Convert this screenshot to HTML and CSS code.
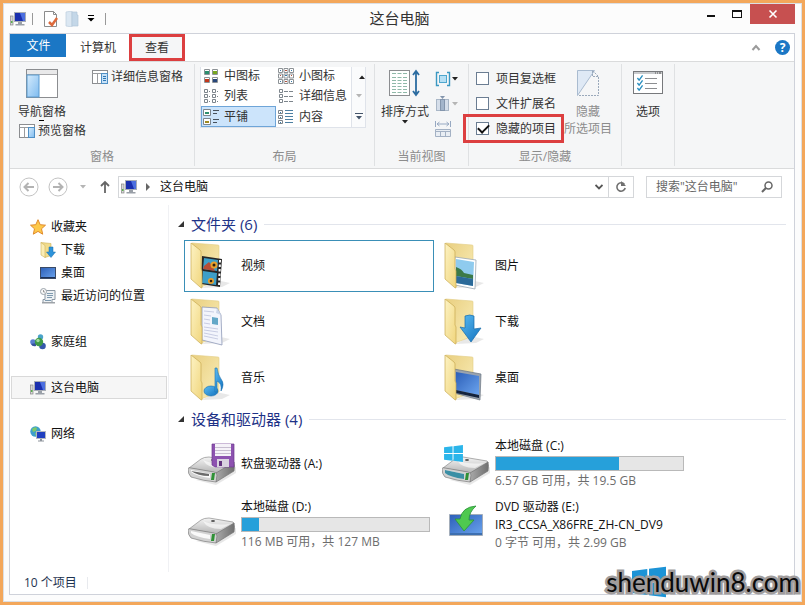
FILE: index.html
```html
<!DOCTYPE html>
<html lang="zh-CN">
<head>
    <meta charset="UTF-8">
    <meta name="viewport" content="width=device-width, initial-scale=1.0">
    <title>这台电脑</title>
    <link rel="stylesheet" href="styles.css">
</head>
<body>
    <!-- shared icon shapes -->
    <svg class="defs" width="0" height="0">
        <defs>
            <linearGradient id="gFlap" x1="0" y1="0" x2="1" y2="1">
                <stop offset="0" stop-color="#fdf3c4"/>
                <stop offset="1" stop-color="#f0d57c"/>
            </linearGradient>
            <linearGradient id="gBack" x1="0" y1="0" x2="1" y2="1">
                <stop offset="0" stop-color="#e9cf80"/>
                <stop offset="1" stop-color="#faeeba"/>
            </linearGradient>
            <linearGradient id="gBlue" x1="0" y1="0" x2="1" y2="1">
                <stop offset="0" stop-color="#5cbcf2"/>
                <stop offset="1" stop-color="#1272bf"/>
            </linearGradient>
            <linearGradient id="gScreen" x1="0" y1="0" x2="1" y2="1">
                <stop offset="0" stop-color="#2c5fb8"/>
                <stop offset="1" stop-color="#6ba4ee"/>
            </linearGradient>
            <linearGradient id="gPane" x1="0" y1="0" x2="1" y2="1">
                <stop offset="0" stop-color="#d5ebfc"/>
                <stop offset="1" stop-color="#7fbcf0"/>
            </linearGradient>
            <linearGradient id="gMetal" x1="0" y1="0" x2="0" y2="1">
                <stop offset="0" stop-color="#f4f4f4"/>
                <stop offset="1" stop-color="#b4b4b4"/>
            </linearGradient>
            <linearGradient id="gSide" x1="0" y1="0" x2="1" y2="0">
                <stop offset="0" stop-color="#a9a9a9"/>
                <stop offset="1" stop-color="#6f6f6f"/>
            </linearGradient>
        </defs>
        <symbol id="pc" viewBox="0 0 16 16">
            <rect x="0.5" y="5" width="2.5" height="9" fill="#d8d8d8" stroke="#888" stroke-width="0.7"/>
            <rect x="1" y="10" width="1.5" height="2" fill="#58b04c"/>
            <rect x="4.5" y="1.5" width="11" height="9" fill="#1a2fae" stroke="#a8adb6"/>
            <path d="M10 2h5v8h-2z" fill="#4c6fe0"/>
            <path d="M8 11h4v2H8zM5.500 13h9v1.500h-9z" fill="#9aa0a8"/>
        </symbol>
        <symbol id="folder" viewBox="0 0 48 48">
            <path d="M14 46l20-1 8-4-14-3z" fill="#d9d9d9" opacity="0.6"/>
            <path d="M4 1l26 2q1 0 1 1v34l-18 7z" fill="url(#gBack)" stroke="#e2cd85" stroke-width="0.6"/>
        </symbol>
        <symbol id="flap" viewBox="0 0 48 48">
            <path d="M3 1l9 7q1 1 1 2v17l1 2v17q-1 0-2-1L3 37z" fill="url(#gFlap)" stroke="#c9ab52" stroke-width="0.7"/>
        </symbol>
        <symbol id="disk" viewBox="0 0 48 48">
            <path d="M8 40l20 5 20-12v-6z" fill="#cfcfcf" opacity="0.5"/>
            <path d="M1 28l12-9q3-2 8-2l24 4q2 1 0 3L29 33z" fill="url(#gMetal)" stroke="#8d8d8d" stroke-width="0.7"/>
            <path d="M46 22L28 33v9l18-11q1-5 0-9z" fill="url(#gSide)" stroke="#777" stroke-width="0.7"/>
            <path d="M0 29q0-2 3-1l23 4q3 1 3 3l-1 7q-12-1-25-5-3-3-3-8z" fill="#d2d2d2" stroke="#7c7c7c" stroke-width="0.7"/>
            <path d="M3 30l19 4v4Q8 36 3 32z" fill="#fafafa"/>
            <path d="M24 33h3l-1 7h-3z" fill="#2f9136"/>
            <path d="M15 20q10 5 27 3l-9 5q-14 0-18-8z" fill="#fff" opacity="0.6"/>
            <ellipse cx="25" cy="20" rx="2" ry="1" fill="#555"/>
        </symbol>
        <symbol id="caret" viewBox="0 0 6 4">
            <path d="M0 0h6L3 3.500z"/>
        </symbol>
        <symbol id="winlogo" viewBox="0 0 20 18">
            <path d="M0 2.500l9-1.200v7.200H0zM10 1.200L20 0v8.500H10zM0 9.500h9v7.200l-9-1.200zM10 9.500h10V18l-10-1.200z"/>
        </symbol>
        <symbol id="tick" viewBox="0 0 8 7">
            <path d="M1 3.500L3 6l4-5.500" fill="none" stroke="#2a8fc0" stroke-width="1.600"/>
        </symbol>
    </svg>

    <div class="window">
        <header class="title-bar">
            <div class="quick-access">
                <svg class="icon16"><use href="#pc"/></svg>
                <span class="bar"></span>
                <svg class="icon16 page" viewBox="0 0 16 16">
                    <path d="M1.500 0.500h9l3 3v12h-12z" fill="#fff" stroke="#8b8b8b"/>
                    <path d="M10.500 0.500v3h3" fill="none" stroke="#8b8b8b"/>
                    <path d="M6 11l3 3 5-7" fill="none" stroke="#dd6a3c" stroke-width="2.500"/>
                </svg>
                <svg class="icon16" viewBox="0 0 16 16">
                    <path d="M1 1l6-1v16l-6-1z" fill="#dbe7f2" stroke="#bccddd" stroke-width="0.700"/>
                    <path d="M7 1h5v3h1v11H7z" fill="#c4d7e8" stroke="#b3c6d8" stroke-width="0.700"/>
                </svg>
                <svg class="quick-more" viewBox="0 0 8 7"><path d="M1 0h6v1H1zM0.500 3h7L4 6.500z"/></svg>
                <span class="bar"></span>
            </div>
            <h1>这台电脑</h1>
            <div class="window-controls">
                <button type="button" aria-label="最小化">
                    <svg width="10" height="10" viewBox="0 0 10 10"><path d="M1 6h8v2H1z" fill="#111"/></svg>
                </button>
                <button type="button" aria-label="最大化">
                    <svg width="10" height="10" viewBox="0 0 10 10"><path d="M0 1h10v8H0zM1 3v5h8V3z" fill="#111" fill-rule="evenodd"/></svg>
                </button>
                <button type="button" class="close" aria-label="关闭">
                    <svg width="10" height="10" viewBox="0 0 10 10"><path d="M1.500 1.500l7 7M8.500 1.500l-7 7" stroke="#fff" stroke-width="1.600"/></svg>
                </button>
            </div>
        </header>

        <div class="frame">
            <div class="tabs">
                <button type="button" class="tab file">文件</button>
                <button type="button" class="tab">计算机</button>
                <button type="button" class="tab active marked">查看</button>
                <div class="tab-tools">
                    <svg width="10" height="7" viewBox="0 0 10 7"><path d="M1.500 6L5 2l3.500 4" fill="none" stroke="#9b9b9b" stroke-width="2"/></svg>
                    <button type="button" class="help" aria-label="帮助">?</button>
                </div>
            </div>

            <div class="ribbon">
                <section class="group panes">
                    <div class="group-body">
                        <div class="pane-column">
                            <button type="button" class="big">
                                <svg width="32" height="30" viewBox="0 0 32 30">
                                    <rect x="0.500" y="0.500" width="31" height="28" fill="#fff" stroke="#8b8d90"/>
                                    <path d="M1 1h30v4H1z" fill="#e9e9ea"/>
                                    <path d="M1 5.500h30" stroke="#a8a8aa"/>
                                    <rect x="1" y="6" width="12" height="22" fill="url(#gPane)" stroke="#5b9bd0"/>
                                </svg>
                                <span>导航窗格</span>
                                <svg class="dash" width="6" height="2"><path d="M0 0h5v1H0z"/></svg>
                            </button>
                            <button type="button" class="small">
                                <svg class="icon16" viewBox="0 0 16 16">
                                    <rect x="0.500" y="1.500" width="15" height="13" fill="#fff" stroke="#8b8d90"/>
                                    <path d="M0.500 4.500h15M5.500 4.500v10" stroke="#9a9c9f"/>
                                    <rect x="9.500" y="4.500" width="6" height="10" fill="url(#gPane)" stroke="#4f8fc4"/>
                                </svg>
                                预览窗格
                            </button>
                        </div>
                        <button type="button" class="small">
                            <svg class="icon16" viewBox="0 0 16 16">
                                <rect x="0.500" y="1.500" width="15" height="13" fill="#fff" stroke="#8b8d90"/>
                                <path d="M0.500 4.500h15M5.500 4.500v10" stroke="#9a9c9f"/>
                                <rect x="9.500" y="4.500" width="6" height="10" fill="#c8e2f8" stroke="#4f8fc4"/>
                                <path d="M11 7.500h3M11 9.500h3M11 11.500h3" stroke="#2e78b5"/>
                            </svg>
                            详细信息窗格
                        </button>
                    </div>
                    <h2>窗格</h2>
                </section>

                <section class="group layout">
                    <div class="group-body">
                        <div class="gallery">
                            <button type="button">
                                <svg class="icon16" viewBox="0 0 16 16">
                                    <path d="M1.500 1.500h5v5h-5zM9.500 1.500h5v5h-5zM1.500 9.500h5v5h-5zM9.500 9.500h5v5h-5z" fill="#fff" stroke="#8d9296"/>
                                    <path d="M2 3h4v3H2z" fill="#2d8f6f"/><path d="M10 3h4v3h-4z" fill="#78a820"/>
                                    <path d="M2 11h4v3H2z" fill="#c3381c"/><path d="M10 11h4v3h-4z" fill="#27467a"/>
                                </svg>
                                中图标
                            </button>
                            <button type="button">
                                <svg class="icon16" viewBox="0 0 16 16">
                                    <path d="M0.500 0.500h4v4h-4zM6 0.500h4v4H6zM11.500 0.500h4v4h-4zM0.500 6h4v4h-4zM6 6h4v4H6zM11.500 6h4v4h-4zM0.500 11.500h4v4h-4zM6 11.500h4v4H6zM11.500 11.500h4v4h-4z" fill="#fff" stroke="#8d9296"/>
                                    <path d="M2 2h1v1H2zM13 2h1v1h-1zM7 7h2v1H7zM2 13h1v1H2zM13 13h1v1h-1z" fill="#357aa8"/>
                                    <path d="M7 2h2v1H7zM2 7h1v1H2zM13 7h1v1h-1zM7 13h2v1H7z" fill="#b0503c"/>
                                </svg>
                                小图标
                            </button>
                            <button type="button">
                                <svg class="icon16" viewBox="0 0 16 16">
                                    <path d="M1.500 1.500h3v3h-3zM1.500 6.500h3v3h-3zM1.500 11.500h3v3h-3zM9.500 1.500h3v3h-3zM9.500 6.500h3v3h-3zM9.500 11.500h3v3h-3z" fill="#fff" stroke="#7d858c"/>
                                    <path d="M6 3.500h1M6 8.500h1M6 13.500h1M14 3.500h1M14 8.500h1M14 13.500h1" stroke="#7d858c"/>
                                </svg>
                                列表
                            </button>
                            <button type="button">
                                <svg class="icon16" viewBox="0 0 16 16">
                                    <path d="M1.500 1.500h3v3h-3zM1.500 6.500h3v3h-3zM1.500 11.500h3v3h-3z" fill="#fff" stroke="#7d858c"/>
                                    <path d="M6 3.500h4M6 8.500h4M6 13.500h4M11 3.500h4M11 8.500h4M11 13.500h4" stroke="#7d858c"/>
                                </svg>
                                详细信息
                            </button>
                            <button type="button" class="selected">
                                <svg class="icon16" viewBox="0 0 16 16">
                                    <path d="M0.500 0.500h7v6h-7zM0.500 9.500h7v6h-7z" fill="#fff" stroke="#7d858c"/>
                                    <path d="M2 3h4v2H2z" fill="#2d8f6f"/><path d="M2 12h4v2H2z" fill="#a08a20"/>
                                    <path d="M10 1.500h6M10 4.500h4M10 10.500h6M10 13.500h4" stroke="#47515c"/>
                                </svg>
                                平铺
                            </button>
                            <button type="button">
                                <svg class="icon16" viewBox="0 0 16 16">
                                    <path d="M0.500 1.500h4v3h-4zM0.500 6.500h4v3h-4zM0.500 11.500h4v3h-4z" fill="#fff" stroke="#7d858c"/>
                                    <path d="M2 3h1v1H2zM2 8h1v1H2zM2 13h1v1H2z" fill="#357aa8"/>
                                    <path d="M7 1.500h8M7 4.500h8M7 7.500h8M7 10.500h8M7 13.500h8" stroke="#4c7fa2"/>
                                </svg>
                                内容
                            </button>
                            <div class="gallery-scroll">
                                <svg class="caret up"><use href="#caret"/></svg>
                                <svg class="caret dim"><use href="#caret"/></svg>
                                <svg width="8" height="7" viewBox="0 0 8 7"><path d="M0 0h8v1H0zM1 3h6L4 6.500z" fill="#44546a"/></svg>
                            </div>
                        </div>
                    </div>
                    <h2>布局</h2>
                </section>

                <section class="group view">
                    <div class="group-body">
                        <button type="button" class="big">
                            <svg width="32" height="30" viewBox="0 0 32 30">
                                <rect x="0.500" y="1.500" width="20" height="25" fill="#fff" stroke="#8b8d90"/>
                                <path d="M3 4.500h15M3 8.500h15M3 11.500h15M3 14.500h15M3 17.500h15M3 20.500h15M3 23.500h15" stroke="#8fb9a9" stroke-dasharray="4 1.500"/>
                                <path d="M27 3v22M24 6l3-4 3 4M24 22l3 4 3-4" fill="none" stroke="#2c6ca0" stroke-width="1.800"/>
                            </svg>
                            <span>排序方式</span>
                            <svg class="caret"><use href="#caret"/></svg>
                        </button>
                        <div class="view-tools">
                            <button type="button" aria-label="分组依据">
                                <svg class="icon16" viewBox="0 0 16 16">
                                    <path d="M4 1.500H1.500v13H4M12 1.500h2.500v13H12" fill="none" stroke="#3b98c2" stroke-width="1.400"/>
                                    <rect x="4.500" y="4.500" width="7" height="7" fill="#b7e0f4" stroke="#4fa7ce"/>
                                </svg>
                                <svg class="caret"><use href="#caret"/></svg>
                            </button>
                            <button type="button" aria-label="添加列">
                                <svg class="icon16" viewBox="0 0 16 16">
                                    <rect x="1.500" y="3.500" width="12" height="11" fill="#d5deea" stroke="#a9b7c7"/>
                                    <rect x="5.500" y="3.500" width="4" height="11" fill="#a3b5cb" stroke="#8496ad"/>
                                    <path d="M5 0h5L7.500 3z" fill="#8496ad"/>
                                </svg>
                                <svg class="caret dim"><use href="#caret"/></svg>
                            </button>
                            <button type="button" aria-label="调整列宽">
                                <svg class="icon16" viewBox="0 0 16 16">
                                    <path d="M0.500 0v6M15.500 0v6M2 3h12M4.500 1L2 3l2.500 2M11.500 1L14 3l-2.500 2" fill="none" stroke="#97a9c2"/>
                                    <path d="M0.500 8.500h15v7h-15zM0.500 10.500h15M5.500 10.500v5M10.500 10.500v5" fill="#e9eef4" stroke="#a3b1c4"/>
                                </svg>
                            </button>
                        </div>
                    </div>
                    <h2>当前视图</h2>
                </section>

                <section class="group show-hide">
                    <div class="group-body">
                        <div class="checks">
                            <label><input type="checkbox">项目复选框</label>
                            <label><input type="checkbox">文件扩展名</label>
                            <label class="marked"><input type="checkbox" checked>隐藏的项目</label>
                        </div>
                        <button type="button" class="big disabled" disabled>
                            <svg width="24" height="30" viewBox="0 0 24 30">
                                <path d="M1.500 1.500h17l-17 25z" fill="#dfe9f5" stroke="#a9bbd0"/>
                                <path d="M16.500 1.500l6 6h-6zM22.500 8v18.500H2" fill="none" stroke="#9aa9bb" stroke-dasharray="2 1"/>
                            </svg>
                            <span>隐藏</span>
                            <span>所选项目</span>
                        </button>
                    </div>
                    <h2>显示/隐藏</h2>
                </section>

                <section class="group options">
                    <div class="group-body">
                        <button type="button" class="big">
                            <svg width="30" height="30" viewBox="0 0 30 30">
                                <rect x="0.500" y="2.500" width="29" height="22" fill="#fff" stroke="#77797c"/>
                                <path d="M1 3h28v2H1z" fill="#c9cbce"/>
                                <path d="M22 4h1M24 4h1M26 4h2" stroke="#555"/>
                                <path d="M12 9.500h12M12 14.500h12M12 19.500h12" stroke="#8c8e91"/>
                                <use href="#tick" x="3" y="6" width="8" height="6"/>
                                <use href="#tick" x="3" y="11" width="8" height="6"/>
                                <use href="#tick" x="3" y="16" width="8" height="6"/>
                            </svg>
                            <span>选项</span>
                        </button>
                    </div>
                </section>
            </div>

            <div class="address-row">
                <button type="button" class="round" aria-label="后退">
                    <svg width="20" height="20" viewBox="0 0 20 20"><circle cx="10" cy="10" r="9"/><path d="M15 10H6M9.500 6L5.500 10l4 4"/></svg>
                </button>
                <button type="button" class="round" aria-label="前进">
                    <svg width="20" height="20" viewBox="0 0 20 20"><circle cx="10" cy="10" r="9"/><path d="M5 10h9M10.500 6l4 4-4 4"/></svg>
                </button>
                <svg class="caret dim"><use href="#caret"/></svg>
                <button type="button" class="up" aria-label="上移">
                    <svg width="10" height="14" viewBox="0 0 10 14"><path d="M5 13V2M1 6l4-4 4 4" fill="none" stroke="#666" stroke-width="1.800"/></svg>
                </button>
                <div class="address">
                    <svg class="icon16"><use href="#pc"/></svg>
                    <svg width="5" height="8" viewBox="0 0 5 8"><path d="M0 0l4 4-4 4z" fill="#666"/></svg>
                    <a href="#">这台电脑</a>
                    <svg class="open" width="8" height="6" viewBox="0 0 8 6"><path d="M0.500 1L4 4.500 7.500 1" fill="none" stroke="#555" stroke-width="1.800"/></svg>
                    <button type="button" class="refresh" aria-label="刷新">
                        <svg width="12" height="12" viewBox="0 0 12 12"><path d="M9.500 3.500A4.200 4.200 0 1 0 10.200 7" fill="none" stroke="#707070" stroke-width="1.600"/><path d="M6 0v5h5z" fill="#707070"/></svg>
                    </button>
                </div>
                <div class="search">
                    <input type="text" aria-label="搜索" placeholder="搜索&quot;这台电脑&quot;">
                    <svg width="12" height="12" viewBox="0 0 12 12"><circle cx="7.500" cy="4.500" r="3.500" fill="none" stroke="#666" stroke-width="1.500"/><path d="M5 7L1 11" stroke="#666" stroke-width="2"/></svg>
                </div>
            </div>

            <div class="main">
                <nav class="tree">
                    <div class="tree-group">
                        <a href="#">
                            <svg class="icon16" viewBox="0 0 16 16"><path d="M8 0.700l2.200 5 5.300.5-4 3.600 1.200 5.400L8 12.400l-4.700 2.800 1.200-5.400-4-3.600 5.300-.5z" fill="#fdc94a" stroke="#e08a2c"/></svg>
                            收藏夹
                        </a>
                        <a href="#" class="child">
                            <svg class="icon16" viewBox="0 0 16 16">
                                <path d="M1 0.500l10 1v12l-6 2z" fill="#f1dc8c" stroke="#cfb15a" stroke-width="0.600"/>
                                <path d="M1 0.500l4 3v12L1 13z" fill="#fbedb4" stroke="#cfb15a" stroke-width="0.600"/>
                                <path d="M9 5h4v5h2.500L11 15.500 6.500 10H9z" fill="#2d93da" stroke="#1a6cab" stroke-width="0.500"/>
                            </svg>
                            下载
                        </a>
                        <a href="#" class="child">
                            <svg class="icon16" viewBox="0 0 16 16">
                                <rect x="0.500" y="2.500" width="15" height="11" fill="url(#gScreen)" stroke="#3a4a66"/>
                                <path d="M1 12h14v1H1z" fill="#1b3158"/>
                            </svg>
                            桌面
                        </a>
                        <a href="#" class="child">
                            <svg class="icon16" viewBox="0 0 16 16">
                                <path d="M5 2.500h10v9h-3v3H3v-3h2z" fill="#edf1f4" stroke="#8b98a4"/>
                                <path d="M7 5.500h6M7 7.500h6M7 9.500h5M5 12.500h6" stroke="#7f9bb0"/>
                                <circle cx="3.500" cy="3.500" r="3" fill="#f8f8f8" stroke="#9aa3aa"/>
                                <path d="M3.500 2v2h1.500" fill="none" stroke="#777" stroke-width="0.700"/>
                                <path d="M2 14h13v1.500H2z" fill="#9ea3a8"/>
                            </svg>
                            最近访问的位置
                        </a>
                    </div>
                    <div class="tree-group">
                        <a href="#">
                            <svg class="icon16" viewBox="0 0 16 16">
                                <circle cx="10.500" cy="3" r="2.700" fill="#4aa3c9"/>
                                <circle cx="3" cy="8" r="2.800" fill="#5a7fd0"/>
                                <circle cx="12.500" cy="12" r="3.300" fill="#3558ac"/>
                                <path d="M6 12q-4 1-5-2l5-1z" fill="#35529c"/>
                                <circle cx="9" cy="8" r="4.200" fill="#3f9a48"/>
                                <circle cx="8" cy="6.500" r="1.700" fill="#a3dba0"/>
                            </svg>
                            家庭组
                        </a>
                    </div>
                    <div class="tree-group">
                        <a href="#" class="current">
                            <svg class="icon16"><use href="#pc"/></svg>
                            这台电脑
                        </a>
                    </div>
                    <div class="tree-group">
                        <a href="#">
                            <svg class="icon16" viewBox="0 0 16 16">
                                <circle cx="5.500" cy="5.500" r="5.200" fill="#3d9fcc"/>
                                <path d="M2 3q3-3 5-1L6 5l-3 1zM5 7l4-1v3l-3 1.500z" fill="#7cc96a"/>
                                <rect x="6.500" y="5.500" width="9" height="7" fill="#1f3fc0" stroke="#b3b8c0"/>
                                <path d="M10 13h2v1.500h-2zM8 14.500h6v1H8z" fill="#8d949c"/>
                            </svg>
                            网络
                        </a>
                    </div>
                </nav>

                <div class="content">
                    <h3><svg width="6" height="6" viewBox="0 0 6 6"><path d="M6 0v6H0z" fill="#333"/></svg>文件夹 (6)</h3>
                    <div class="tiles">
                        <div class="tile focused">
                            <svg class="icon48" viewBox="0 0 48 48">
                                <use href="#folder"/>
                                <path d="M14 14l20 3-2 28-19-3z" fill="#262626"/>
                                <path d="M16 16l14 2-1 11-14-2zM15 29l14 2-1 12-14-2z" fill="#3e9fc8"/>
                                <path d="M16 24l5-4 4 5 2 4-12-2z" fill="#b84c34"/>
                                <circle cx="26" cy="23" r="3.500" fill="#e8a02c"/><circle cx="26" cy="23" r="1.500" fill="#31200f"/>
                                <circle cx="23" cy="39" r="3" fill="#e8a02c"/><circle cx="23" cy="39" r="1.300" fill="#31200f"/>
                                <path d="M32 18l-1 26" stroke="#fff" stroke-width="2" stroke-dasharray="2.500 2"/>
                                <use href="#flap"/>
                            </svg>
                            视频
                        </div>
                        <div class="tile">
                            <svg class="icon48" viewBox="0 0 48 48">
                                <use href="#folder"/>
                                <path d="M14 9l15 1 4 7 1 30-20-5z" fill="#f3f5fc" stroke="#8e99b8" stroke-width="0.800"/>
                                <path d="M29 10l-1 5 5 2z" fill="#cdd7ea"/>
                                <path d="M16 13l10 1M16 17l7 1M16 21l6 1M16 25l6 1M16 29l14 2M16 32l14 2M16 35l14 3M16 38l14 3" stroke="#bcc2dc" stroke-width="0.800"/>
                                <path d="M24 19l6 1v7l-6-1z" fill="#64a8c8"/>
                                <use href="#flap"/>
                            </svg>
                            文档
                        </div>
                        <div class="tile">
                            <svg class="icon48" viewBox="0 0 48 48">
                                <use href="#folder"/>
                                <use href="#flap"/>
                                <ellipse cx="23" cy="37" rx="7" ry="5" fill="url(#gBlue)" stroke="#1a6fae" stroke-width="0.600"/>
                                <path d="M27 38V14h2q1 7 4 11 4 5 0 12 1-8-4-10v11z" fill="url(#gBlue)" stroke="#1a6fae" stroke-width="0.600"/>
                            </svg>
                            音乐
                        </div>
                        <div class="tile">
                            <svg class="icon48" viewBox="0 0 48 48">
                                <use href="#folder"/>
                                <path d="M13 15l21 3-1 29-20-4z" fill="#fff" stroke="#9ba8b4" stroke-width="0.800"/>
                                <path d="M14 17l18 3-1 24-17-3z" fill="#8fcbee"/>
                                <path d="M14 25q6 2 8 6l9 2v4l-17-3z" fill="#3c7a48"/>
                                <path d="M14 34l17 3v7l-17-3z" fill="#2b6a99"/>
                                <use href="#flap"/>
                            </svg>
                            图片
                        </div>
                        <div class="tile">
                            <svg class="icon48" viewBox="0 0 48 48">
                                <use href="#folder"/>
                                <use href="#flap"/>
                                <path d="M23 18q5-2 9 0v13l7-1-10 14-11-15 5 1z" fill="url(#gBlue)" stroke="#176ba9" stroke-width="0.700"/>
                            </svg>
                            下载
                        </div>
                        <div class="tile">
                            <svg class="icon48" viewBox="0 0 48 48">
                                <use href="#folder"/>
                                <path d="M12 15l27 5-1 26-26-7z" fill="#9aa3ae" stroke="#6a7582" stroke-width="0.700"/>
                                <path d="M14 18l23 4v19l-23-5z" fill="url(#gScreen)"/>
                                <path d="M14 36l23 5v3l-23-5z" fill="#14233d"/>
                                <use href="#flap"/>
                            </svg>
                            桌面
                        </div>
                    </div>

                    <h3><svg width="6" height="6" viewBox="0 0 6 6"><path d="M6 0v6H0z" fill="#333"/></svg>设备和驱动器 (4)</h3>
                    <div class="tiles drives">
                        <div class="tile">
                            <svg class="icon48" viewBox="0 0 48 48">
                                <use href="#disk"/>
                                <path d="M3 31l18 3v2Q10 36 3 31z" fill="#6a6a6a"/>
                                <path d="M24 4h22v23H27l-3-2z" fill="#8d52b0" stroke="#6e3a90" stroke-width="0.700"/>
                                <path d="M27 4h16v12H27z" fill="#f5f2f8"/>
                                <path d="M27 7.500h16M27 10.500h16M27 13.500h16" stroke="#c7bdd0"/>
                                <path d="M29 19h12v8H29z" fill="#d9d3e0"/><path d="M31 21h3v5h-3z" fill="#63347f"/>
                            </svg>
                            软盘驱动器 (A:)
                        </div>
                        <div class="tile">
                            <svg class="icon48" viewBox="0 0 48 48"><use href="#disk"/></svg>
                            <div class="info">
                                <span>本地磁盘 (D:)</span>
                                <div class="usage"><div class="used" style="width: 9%"></div></div>
                                <span class="free">116 MB 可用，共 127 MB</span>
                            </div>
                        </div>
                        <div class="tile">
                            <svg class="icon48" viewBox="0 0 48 48">
                                <use href="#disk"/>
                                <path d="M3 30l19 4v5Q8 37 3 33z" fill="#3b8fa5"/>
                                <use href="#winlogo" x="2" y="5" width="19" height="17" fill="#2bb5ea"/>
                            </svg>
                            <div class="info">
                                <span>本地磁盘 (C:)</span>
                                <div class="usage"><div class="used" style="width: 66%"></div></div>
                                <span class="free">6.57 GB 可用，共 19.5 GB</span>
                            </div>
                        </div>
                        <div class="tile">
                            <svg class="icon48" viewBox="0 0 48 48">
                                <path d="M7.500 13.500h33v21h-33z" fill="url(#gScreen)" stroke="#a3adba"/>
                                <path d="M8 32h32v2H8z" fill="#3d6fb0"/>
                                <path d="M34 5q-14 1-16 13h-5l9 12 10-11h-5q0-8 7-14z" fill="#4fc950" stroke="#2a9238" stroke-width="0.800"/>
                            </svg>
                            <div class="info">
                                <span>DVD 驱动器 (E:)</span>
                                <span>IR3_CCSA_X86FRE_ZH-CN_DV9</span>
                                <span class="free">0 字节 可用，共 2.99 GB</span>
                            </div>
                        </div>
                    </div>
                </div>
            </div>

            <footer class="status">10 个项目<span class="bar"></span></footer>
        </div>
    </div>

    <div class="watermark">
        <svg width="34" height="36"><use href="#winlogo" fill="#1c93d6"/></svg>
        <span>shenduwin8.com</span>
    </div>
</body>
</html>
```
FILE: styles.css
```css
* {
    box-sizing: border-box;
}
body {
    margin: 0;
    padding: 3px;
    min-height: 100vh;
    display: flex;
    position: relative;
    background-color: #f3a75b;
    font-family: "Open Sans", "Noto Sans CJK SC", sans-serif;
    font-size: 12px;
    line-height: 16px;
    color: #111;
}
svg {
    display: block;
    flex: none;
}
.defs {
    position: absolute;
}
button {
    font: inherit;
    color: inherit;
    background: none;
    border: none;
    padding: 0;
}
a {
    color: inherit;
    text-decoration: none;
}
h1, h2, h3 {
    margin: 0;
    font-weight: normal;
}
.icon16 {
    width: 16px;
    height: 16px;
}
.icon48 {
    width: 48px;
    height: 48px;
}
.caret {
    width: 6px;
    height: 4px;
    fill: #222;
}
.caret.up {
    transform: rotate(180deg);
}
.caret.dim {
    fill: #b5b5b5;
}
.bar {
    width: 1px;
    height: 12px;
    background-color: #999;
}
.window {
    flex: 1;
    display: flex;
    flex-direction: column;
    background-color: #fcfcfc;
    border: 1px solid #dcdfe4;
    padding-bottom: 6px;
}

/* title bar */
.title-bar {
    display: grid;
    grid-template-columns: 1fr auto 1fr;
    height: 29px;
    padding-right: 6px;
}
.quick-access {
    display: flex;
    align-items: center;
    gap: 6px;
    padding-left: 6px;
}
.quick-access .page {
    margin-left: 4px;
}
.quick-more {
    width: 8px;
    height: 7px;
}
.quick-more + .bar {
    margin-left: 4px;
}
h1 {
    font-size: 15px;
    line-height: 29px;
    color: #333;
}
.window-controls {
    display: flex;
    justify-content: flex-end;
    align-items: flex-start;
}
.window-controls button {
    display: flex;
    justify-content: center;
    align-items: center;
    width: 26px;
    height: 20px;
}
.window-controls .close {
    width: 45px;
    background-color: #c75050;
}

/* tabs */
.frame {
    flex: 1;
    display: flex;
    flex-direction: column;
    margin: 0 6px 0 5px;
    border: 1px solid #cfd2da;
    background-color: #fff;
}
.tabs {
    display: flex;
    height: 27px;
    color: #333;
}
.tab {
    position: relative;
    padding: 0 13px 0 14px;
    height: 27px;
}
.tab.file {
    width: 56px;
    height: 23px;
    background-color: #1b77c5;
    color: #fff;
}
.tab.active {
    padding: 0 16px;
    background-color: #f5f6f7;
}
.marked {
    position: relative;
}
.marked::after {
    content: "";
    position: absolute;
    inset: 0;
    border: 3px solid #dc3f40;
}
.tab-tools {
    display: flex;
    align-items: center;
    gap: 14px;
    margin-left: auto;
    padding-right: 4px;
}
.help {
    width: 15px;
    height: 15px;
    border-radius: 50%;
    background-color: #1b77c5;
    color: #fff;
    font-weight: bold;
    line-height: 15px;
}

/* ribbon */
.ribbon {
    display: flex;
    height: 108px;
    padding: 2px 0;
    background-color: #f5f6f7;
    border-top: 1px solid #dadbdc;
    border-bottom: 1px solid #dadbdc;
    color: #333;
}
.group {
    display: flex;
    flex-direction: column;
    border-right: 1px solid #dfe1e3;
}
.group-body {
    flex: 1;
    display: flex;
    align-items: flex-start;
    padding-top: 5px;
}
.group h2 {
    font-size: 12px;
    line-height: 18px;
    text-align: center;
    color: #8c8c8c;
}
.panes {
    width: 185px;
}
.layout {
    width: 180px;
}
.view {
    width: 94px;
}
.show-hide {
    width: 153px;
}
.options {
    width: 53px;
}
.panes .group-body {
    gap: 6px;
    padding-left: 8px;
}
.pane-column {
    display: flex;
    flex-direction: column;
    align-items: flex-start;
}
.big {
    display: flex;
    flex-direction: column;
    align-items: center;
    flex: none;
}
.big span {
    line-height: 17px;
    margin-top: 4px;
}
.big span + span {
    margin-top: 0;
}
.dash {
    height: 3px;
}
.small {
    display: flex;
    align-items: center;
    gap: 3px;
}
.pane-column .small {
    padding: 0 0 0 1px;
}
.disabled {
    color: #8c8c8c;
}
.layout .group-body {
    padding: 3px 9px 0 5px;
}
.gallery {
    display: grid;
    grid-template-columns: 75px 75px 14px;
    grid-template-rows: 18px 21px 21px;
    background-color: #fff;
    border: 1px solid #dfe3ea;
    border-top: none;
}
.gallery button {
    display: flex;
    align-items: center;
    gap: 5px;
    padding-left: 2px;
    overflow: hidden;
}
.gallery .selected {
    background-color: #cce4fb;
    border: 1px solid #6ea5d8;
    padding-left: 1px;
}
.gallery-scroll {
    grid-column: 3;
    grid-row: 1 / 4;
    display: flex;
    flex-direction: column;
    justify-content: space-around;
    align-items: center;
    border-left: 1px solid #dfe3ea;
    background-color: #fafbfc;
}
.view .group-body {
    gap: 6px;
    padding-left: 6px;
}
.view-tools {
    display: flex;
    flex-direction: column;
    gap: 9px;
    padding-top: 2px;
}
.view-tools button {
    display: flex;
    align-items: center;
    gap: 1px;
}
.checks {
    display: flex;
    flex-direction: column;
    width: 95px;
}
.checks label {
    display: flex;
    align-items: center;
    gap: 7px;
    height: 25px;
    padding-left: 7px;
}
.checks input {
    appearance: none;
    width: 13px;
    height: 13px;
    margin: 0;
    border: 1px solid #6b7d92;
    background-color: #fff;
}
.checks input:checked::before {
    content: "";
    display: block;
    width: 9px;
    height: 5px;
    margin: 1px;
    border: solid #111;
    border-width: 0 0 2px 2px;
    transform: rotate(-45deg);
}
.checks .marked::after {
    inset: -2px 0 -2px -6px;
}
.show-hide .group-body {
    padding: 2px 0 0;
}
.show-hide .big {
    padding-top: 3px;
}
.options .group-body {
    justify-content: center;
}

/* address bar */
.address-row {
    display: flex;
    align-items: center;
    height: 36px;
    padding: 0 12px 0 9px;
}
.round circle {
    fill: #fff;
    stroke: #c3c3c3;
}
.round path {
    fill: none;
    stroke: #b3b3b3;
    stroke-width: 2;
}
.round {
    margin-right: 9px;
}
.up {
    margin: 0 8px 0 14px;
}
.address-row > .caret {
    margin-left: 3px;
}
.address {
    flex: 1;
    display: flex;
    align-items: center;
    gap: 9px;
    height: 22px;
    padding-left: 2px;
    border: 1px solid #d5d7da;
}
.open {
    margin-left: auto;
    margin-right: -4px;
}
.refresh {
    display: flex;
    justify-content: center;
    align-items: center;
    width: 25px;
    height: 20px;
    border-left: 1px solid #d5d7da;
}
.search {
    display: flex;
    align-items: center;
    width: 136px;
    height: 22px;
    margin-left: 12px;
    padding: 0 8px 0 9px;
    border: 1px solid #d5d7da;
}
.search input {
    flex: 1;
    min-width: 0;
    border: none;
    padding: 0;
    font: inherit;
    background: none;
}
.search input::placeholder {
    color: #666;
    opacity: 1;
}

/* navigation tree */
.main {
    flex: 1;
    display: flex;
}
.tree {
    display: flex;
    flex-direction: column;
    gap: 23px;
    width: 159px;
    padding: 10px 1px 0;
    border-right: 1px solid #f0f1f4;
}
.tree a {
    display: flex;
    align-items: center;
    gap: 5px;
    height: 23px;
    padding-left: 19px;
    white-space: nowrap;
}
.tree .child {
    padding-left: 29px;
}
.tree .current {
    padding-left: 18px;
    border: 1px solid #d9d9d9;
    background-color: #f6f6f6;
}

/* files */
.content {
    flex: 1;
    padding: 7px 8px 0 9px;
}
h3 {
    display: flex;
    align-items: center;
    gap: 7px;
    font-size: 15px;
    line-height: 24px;
    color: #1e3287;
}
h3::after {
    content: "";
    flex: 1;
    height: 1px;
    background-color: #e2e5ec;
}
.tiles {
    display: grid;
    grid-template-columns: 250px 250px;
    grid-template-rows: repeat(3, 52px);
    grid-auto-flow: column;
    gap: 4px;
    padding: 4px 0 3px 6px;
}
.drives {
    grid-template-rows: repeat(2, 57px);
}
.tile {
    display: flex;
    align-items: center;
    gap: 5px;
    padding: 0 4px;
}
.tile.focused {
    padding: 0 3px;
    border: 1px solid #3a8fb7;
}
.info {
    flex: 1;
    display: flex;
    flex-direction: column;
    gap: 2px;
}
.usage {
    height: 15px;
    border: 1px solid #b9b9b9;
    background-color: #e6e6e6;
}
.used {
    height: 13px;
    background-color: #26a0da;
}
.free {
    color: #6d6d6d;
}

/* status bar */
.status {
    display: flex;
    align-items: center;
    gap: 10px;
    height: 22px;
    padding-left: 14px;
    color: #1e3350;
}
.status .bar {
    background-color: #e8eaee;
}

/* site mark over the corner */
.watermark {
    position: absolute;
    right: 5px;
    bottom: 5px;
    font-family: Lato, sans-serif;
    font-size: 26px;
    line-height: 36px;
}
.watermark svg {
    position: absolute;
    left: 26px;
    top: 0;
}
.watermark span {
    position: relative;
    color: #0a0a0a;
    -webkit-text-stroke: 5px #a09c9c;
    paint-order: stroke fill;
}
```
